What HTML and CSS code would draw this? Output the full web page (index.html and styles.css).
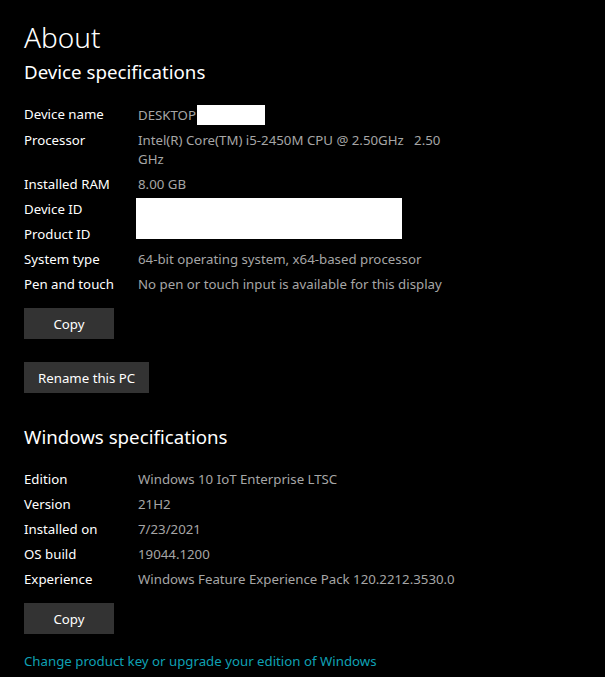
FILE: index.html
```html
<!DOCTYPE html>
<html lang="en">
<head>
    <meta charset="UTF-8">
    <title>About</title>
    <link rel="stylesheet" href="styles.css">
</head>
<body>
    <h1 class="page-title">About</h1>

    <!-- Device specifications -->
    <h2 class="section-title">Device specifications</h2>
    <div class="spec-list">
        <div class="label">Device name</div>
        <div class="value">DESKTOP<span class="redact-name"></span></div>

        <div class="label">Processor</div>
        <div class="value">Intel(R) Core(TM) i5-2450M CPU @ 2.50GHz&nbsp;&nbsp; 2.50<br>GHz</div>

        <div class="label">Installed RAM</div>
        <div class="value">8.00 GB</div>

        <div class="label">Device ID</div>
        <div class="value value-ids"><div class="redact-ids"></div></div>
        <div class="label">Product ID</div>

        <div class="label">System type</div>
        <div class="value">64-bit operating system, x64-based processor</div>

        <div class="label">Pen and touch</div>
        <div class="value">No pen or touch input is available for this display</div>
    </div>

    <button class="btn btn-copy">Copy</button>
    <button class="btn btn-rename">Rename this PC</button>

    <!-- Windows specifications -->
    <h2 class="section-title section-windows">Windows specifications</h2>
    <div class="spec-list">
        <div class="label">Edition</div>
        <div class="value">Windows 10 IoT Enterprise LTSC</div>

        <div class="label">Version</div>
        <div class="value">21H2</div>

        <div class="label">Installed on</div>
        <div class="value">7/23/2021</div>

        <div class="label">OS build</div>
        <div class="value">19044.1200</div>

        <div class="label">Experience</div>
        <div class="value">Windows Feature Experience Pack 120.2212.3530.0</div>
    </div>

    <button class="btn btn-copy">Copy</button>

    <a class="link" href="#">Change product key or upgrade your edition of Windows</a>
</body>
</html>
```

FILE: styles.css
```css
body {
    margin: 0;
    padding: 19px 24px 0;
    background-color: #000;
    color: #fff;
    font-family: "Noto Sans", "Open Sans", sans-serif;
    font-size: 13.25px;
}

.page-title {
    margin: 0;
    font-size: 28px;
    line-height: 36px;
    font-weight: 300;
}

.section-title {
    margin: 3px 0 0;
    font-size: 18.7px;
    line-height: 28px;
    font-weight: 400;
}

.section-windows {
    margin-top: 30px;
}

.spec-list {
    display: grid;
    grid-template-columns: 114px 1fr;
    row-gap: 6px;
    margin-top: 19px;
    line-height: 19px;
}

.label {
    color: #fff;
}

.value {
    color: #a6a6a6;
    white-space: nowrap;
}

.redact-name {
    display: inline-block;
    width: 68px;
    height: 20px;
    margin-left: 1px;
    vertical-align: -5px;
    background-color: #fff;
}

.value-ids {
    grid-row: span 2;
}

.redact-ids {
    width: 266px;
    height: 41px;
    margin: -2px 0 0 -2px;
    background-color: #fff;
}

.btn {
    display: block;
    min-width: 90px;
    height: 31px;
    padding: 0 14px;
    border: none;
    background-color: #333;
    color: #fff;
    font-family: inherit;
    font-size: 13.25px;
}

.btn-copy {
    margin-top: 14px;
}

.btn-rename {
    margin-top: 23px;
}

.link {
    display: block;
    margin-top: 18px;
    line-height: 19px;
    color: #0fa0b4;
    text-decoration: none;
}
```
